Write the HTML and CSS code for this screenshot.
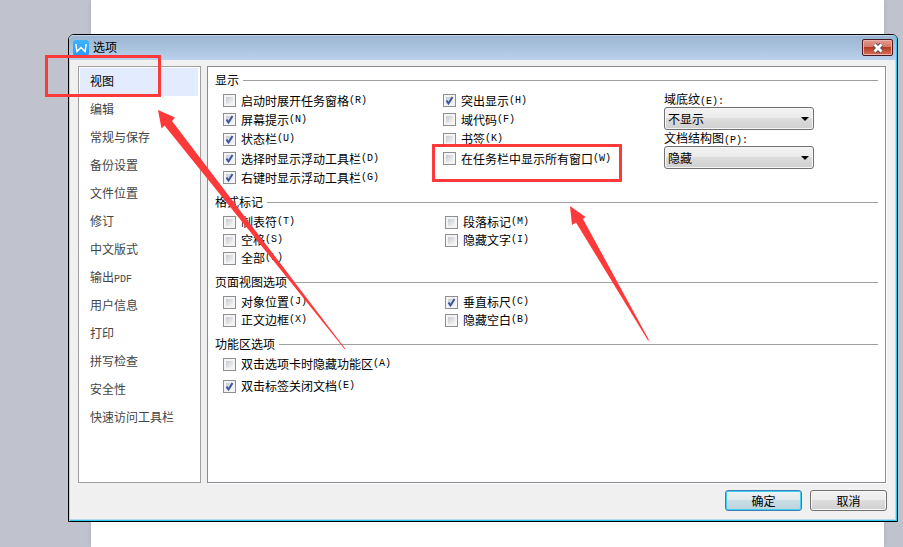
FILE: index.html
```html
<!DOCTYPE html>
<html lang="zh-CN">
<head>
<meta charset="utf-8">
<title>选项</title>
<link rel="stylesheet" href="styles.css">
</head>
<body>
<main class="desktop">
  <section class="dialog" aria-labelledby="dialog-title">
    <header class="titlebar">
      <svg class="logo" viewBox="0 0 16 16" aria-hidden="true">
        <defs><linearGradient id="logo-fill" x1="0" y1="0" x2="0" y2="1"><stop offset="0" stop-color="#3cb4ff"/><stop offset="1" stop-color="#2b97fb"/></linearGradient></defs>
        <rect width="16" height="16" rx="3" fill="url(#logo-fill)"/>
        <path d="M3 4v1.500L4 11.500 8 7.500 12 11.500 13 5.500V4" fill="none" stroke="#fff" stroke-width="1.500"/>
      </svg>
      <h1 id="dialog-title">选项</h1>
      <button class="close" type="button" aria-label="关闭">
        <svg viewBox="0 0 12 10" aria-hidden="true"><path d="M2.500 1.500 9.500 8.500M9.500 1.500 2.500 8.500" stroke="#5a4a58" stroke-width="4.800"/><path d="M2.500 1.500 9.500 8.500M9.500 1.500 2.500 8.500" stroke="#fff" stroke-width="2.800"/></svg>
      </button>
    </header>
    <div class="panes">
      <nav class="tabs">
        <a class="active" href="#view">视图</a>
        <a href="#edit">编辑</a>
        <a href="#general">常规与保存</a>
        <a href="#backup">备份设置</a>
        <a href="#files">文件位置</a>
        <a href="#revision">修订</a>
        <a href="#layout">中文版式</a>
        <a href="#pdf">输出<span class="key">PDF</span></a>
        <a href="#user">用户信息</a>
        <a href="#print">打印</a>
        <a href="#spelling">拼写检查</a>
        <a href="#security">安全性</a>
        <a href="#toolbar">快速访问工具栏</a>
      </nav>
      <form class="settings" id="view">
        <section class="group display">
          <h2>显示</h2>
          <div class="columns">
            <div class="options">
              <label><input type="checkbox">启动时展开任务窗格<span class="key">(R)</span></label>
              <label><input type="checkbox" checked>屏幕提示<span class="key">(N)</span></label>
              <label><input type="checkbox" checked>状态栏<span class="key">(U)</span></label>
              <label><input type="checkbox" checked>选择时显示浮动工具栏<span class="key">(D)</span></label>
              <label><input type="checkbox" checked>右键时显示浮动工具栏<span class="key">(G)</span></label>
            </div>
            <div class="options">
              <label><input type="checkbox" checked>突出显示<span class="key">(H)</span></label>
              <label><input type="checkbox">域代码<span class="key">(F)</span></label>
              <label><input type="checkbox">书签<span class="key">(K)</span></label>
              <label><input type="checkbox">在任务栏中显示所有窗口<span class="key">(W)</span></label>
            </div>
            <div class="fields">
              <label for="shading">域底纹<span class="key">(E):</span></label>
              <select id="shading"><option>不显示</option></select>
              <label for="outline">文档结构图<span class="key">(P):</span></label>
              <select id="outline"><option>隐藏</option></select>
            </div>
          </div>
        </section>
        <section class="group">
          <h2>格式标记</h2>
          <div class="columns">
            <div class="options">
              <label><input type="checkbox">制表符<span class="key">(T)</span></label>
              <label><input type="checkbox">空格<span class="key">(S)</span></label>
              <label><input type="checkbox">全部<span class="key">(L)</span></label>
            </div>
            <div class="options">
              <label><input type="checkbox">段落标记<span class="key">(M)</span></label>
              <label><input type="checkbox">隐藏文字<span class="key">(I)</span></label>
            </div>
          </div>
        </section>
        <section class="group">
          <h2>页面视图选项</h2>
          <div class="columns">
            <div class="options">
              <label><input type="checkbox">对象位置<span class="key">(J)</span></label>
              <label><input type="checkbox">正文边框<span class="key">(X)</span></label>
            </div>
            <div class="options">
              <label><input type="checkbox" checked>垂直标尺<span class="key">(C)</span></label>
              <label><input type="checkbox">隐藏空白<span class="key">(B)</span></label>
            </div>
          </div>
        </section>
        <section class="group ribbon">
          <h2>功能区选项</h2>
          <div class="columns">
            <div class="options">
              <label><input type="checkbox">双击选项卡时隐藏功能区<span class="key">(A)</span></label>
              <label><input type="checkbox" checked>双击标签关闭文档<span class="key">(E)</span></label>
            </div>
          </div>
        </section>
      </form>
    </div>
    <footer class="actions">
      <button class="button primary" type="button">确定</button>
      <button class="button" type="button">取消</button>
    </footer>
  </section>
  <svg class="marks" width="903" height="547" viewBox="0 0 903 547" aria-hidden="true">
    <g fill="none" stroke="#fd3939" stroke-width="3">
      <rect x="46.500" y="56.500" width="113" height="39"/>
      <rect x="433.500" y="145.500" width="187" height="35"/>
    </g>
    <g fill="#fd3939">
      <path d="M158 110 175 117.500 172 121 345.500 349 344.500 349 164.500 125.500 161.500 128.500Z"/>
      <path d="M570 206 585.500 217 583 219 649 340 648 340.500 576 222.500 572 225Z"/>
    </g>
  </svg>
</main>
</body>
</html>
```

FILE: styles.css
```css
* { box-sizing: border-box; }

body {
  margin: 0;
  background: #c0c3cd;
  color: #000;
  font: 12px/16px "Noto Sans CJK SC", sans-serif;
}

h1, h2 { margin: 0; font-size: 12px; font-weight: 400; }
button, select, input { font: inherit; color: inherit; }

.key {
  font-family: "Liberation Mono", monospace;
  font-size: 10px;
  line-height: 10px;
}

.desktop {
  position: relative;
  display: flex;
  min-height: 100vh;
  padding: 34px 5px 25px 68px;
}

/* document page behind the dialog */
.desktop::before {
  content: "";
  position: absolute;
  inset: 0 19px 0 91px;
  background: #fff;
  box-shadow: 0 0 4px #a8abb8;
}

.marks {
  position: absolute;
  top: 0;
  left: 0;
  pointer-events: none;
}

.dialog {
  position: relative;
  flex: 1;
  display: flex;
  flex-direction: column;
  border: 1px solid #000;
  border-radius: 6px 6px 0 0;
  background: #f0f0f0;
  box-shadow: inset 1px 0 #b9d1ea, inset -1px -1px #2cc8ee, inset -2px -2px #b9d8ea;
}

.titlebar {
  display: flex;
  align-items: center;
  gap: 4px;
  height: 25px;
  padding: 0 4px;
  border-radius: 5px 5px 0 0;
  background: linear-gradient(#9ab3d0, #b9d1ea);
  box-shadow: inset -1px 0 #2cc8ee, inset 0 1px #c5d6e8;
}

.logo { width: 16px; height: 16px; }
.titlebar h1 { flex: 1; padding-bottom: 2px; }

.close {
  display: grid;
  place-items: center;
  width: 31px;
  height: 17px;
  padding: 0;
  border: 1px solid #4b1720;
  border-radius: 2px;
  background: linear-gradient(#e39b8d, #d4796a 45%, #b83a22 50%, #d3705a);
  box-shadow: inset 0 0 0 1px #e9b5aa;
}
.close svg { width: 12px; height: 10px; }

.panes {
  flex: 1;
  display: flex;
  gap: 6px;
  padding: 6px 11px 0 9px;
}

.tabs {
  width: 123px;
  padding: 1px;
  border: 1px solid #a0a0a0;
  background: #fff;
}
.tabs a {
  display: block;
  padding: 5px 10px 7px;
  color: #444;
  text-decoration: none;
}
.tabs .active {
  margin-right: 1px;
  background: #e3ebfe;
  color: #000;
}

.settings {
  flex: 1;
  display: flex;
  flex-direction: column;
  gap: 7px;
  padding: 5px 7px;
  border: 1px solid #8b8b94;
  background: #fff;
  box-shadow: 1px 1px #fff;
}

.group h2 {
  display: flex;
  align-items: center;
  gap: 4px;
}
.group h2::after {
  content: "";
  flex: 1;
  height: 1px;
  background: #a0a0a0;
}

.columns {
  display: grid;
  grid-template-columns: 222fr 433fr;
  margin-top: 3px;
  padding-left: 8px;
}
.display .columns { grid-template-columns: 220fr 221fr 214fr; }

.options {
  display: grid;
  grid-auto-rows: 18px;
  align-content: start;
}
.display .options { grid-template-rows: 19px 19px 20px 19px 19px; }
.ribbon .options { row-gap: 4px; }

.options label {
  display: flex;
  align-items: center;
  white-space: nowrap;
}

.options input {
  appearance: none;
  width: 13px;
  height: 13px;
  margin: 0 5px 0 0;
  border: 1px solid #8e8f8f;
  background: linear-gradient(135deg, #c6cad0, #f6f6f6) center / 7px 7px no-repeat, #f4f4f4;
}
.options input:checked {
  background:
    url("data:image/svg+xml,%3Csvg xmlns='http://www.w3.org/2000/svg' viewBox='0 0 11 11'%3E%3Cpath d='M2.500 5.500 4.500 8.500 8.500 2' fill='none' stroke='%233c55a0' stroke-width='2'/%3E%3C/svg%3E") center / 11px 11px no-repeat,
    linear-gradient(135deg, #c6cad0, #f6f6f6) center / 7px 7px no-repeat,
    #f4f4f4;
}

.fields {
  display: flex;
  flex-direction: column;
  align-items: flex-start;
}
.fields label { height: 16px; }
.fields select {
  appearance: none;
  width: 150px;
  height: 23px;
  padding: 0 3px;
  border: 1px solid #707070;
  border-radius: 3px;
  background:
    url("data:image/svg+xml,%3Csvg xmlns='http://www.w3.org/2000/svg' viewBox='0 0 8 4'%3E%3Cpath d='M0 0h8L4 4z'/%3E%3C/svg%3E") right 4px center / 8px 4px no-repeat,
    linear-gradient(#f2f2f2, #ebebeb 50%, #dddddd 50%, #cfcfcf);
  box-shadow: inset 0 0 0 1px #f6f6f6;
}

.actions {
  display: flex;
  justify-content: flex-end;
  gap: 8px;
  padding: 7px 10px 10px;
}

.button {
  width: 77px;
  height: 21px;
  padding: 0;
  border: 1px solid #707070;
  border-radius: 3px;
  background: linear-gradient(#f2f2f2, #ebebeb 50%, #dddddd 50%, #cfcfcf);
  box-shadow: inset 0 0 0 1px #f8f8f8;
}
.primary {
  border-color: #3c7fb1;
  background: linear-gradient(#edf2f5, #dfeaef 50%, #c9dde5 50%, #bdd3dc);
  box-shadow: inset 0 0 0 1px #3fcdf5;
}
```
